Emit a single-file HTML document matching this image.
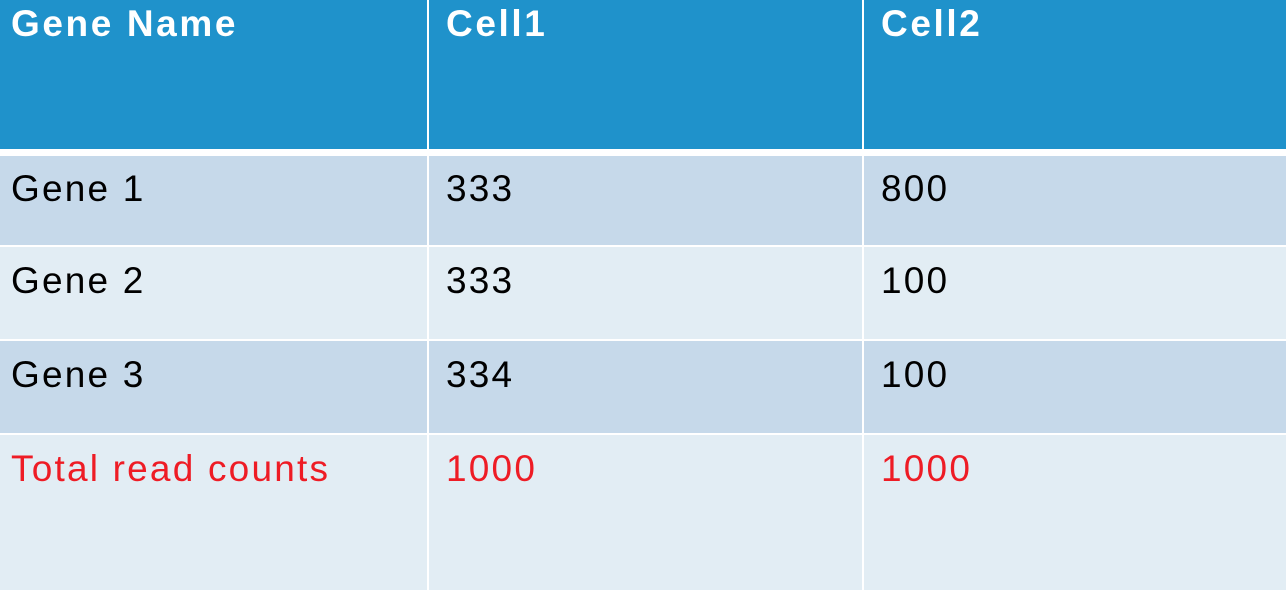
<!DOCTYPE html><html><head><style>
body{margin:0;width:1286px;height:590px;background:#fff;position:relative;overflow:hidden;font-family:"Liberation Sans",sans-serif}
.c{position:absolute;box-sizing:border-box;padding:0 0 0 11px;font-size:37px;letter-spacing:2.2px;color:#000}
.h{background:#1f92cb;color:#fff;font-weight:bold;top:0;height:149px;padding-top:3px;letter-spacing:2.6px}
.a{background:#c6d9ea}.b{background:#e2edf4}
.r{color:#ee1c25}
</style></head><body>
<div class="c h" style="left:0;width:427px">Gene Name</div>
<div class="c h" style="left:429px;width:433px;padding-left:17px">Cell1</div>
<div class="c h" style="left:864px;width:422px;padding-left:17px">Cell2</div>

<div class="c a" style="left:0;width:427px;top:156px;height:89px;padding-top:12px">Gene 1</div>
<div class="c a" style="left:429px;width:433px;top:156px;height:89px;padding:12px 0 0 17px">333</div>
<div class="c a" style="left:864px;width:422px;top:156px;height:89px;padding:12px 0 0 17px">800</div>

<div class="c b" style="left:0;width:427px;top:247px;height:92px;padding-top:13px">Gene 2</div>
<div class="c b" style="left:429px;width:433px;top:247px;height:92px;padding:13px 0 0 17px">333</div>
<div class="c b" style="left:864px;width:422px;top:247px;height:92px;padding:13px 0 0 17px">100</div>

<div class="c a" style="left:0;width:427px;top:341px;height:92px;padding-top:13px">Gene 3</div>
<div class="c a" style="left:429px;width:433px;top:341px;height:92px;padding:13px 0 0 17px">334</div>
<div class="c a" style="left:864px;width:422px;top:341px;height:92px;padding:13px 0 0 17px">100</div>

<div class="c b r" style="left:0;width:427px;top:435px;height:155px;padding-top:13px">Total read counts</div>
<div class="c b r" style="left:429px;width:433px;top:435px;height:155px;padding:13px 0 0 17px">1000</div>
<div class="c b r" style="left:864px;width:422px;top:435px;height:155px;padding:13px 0 0 17px">1000</div>
</body></html>
